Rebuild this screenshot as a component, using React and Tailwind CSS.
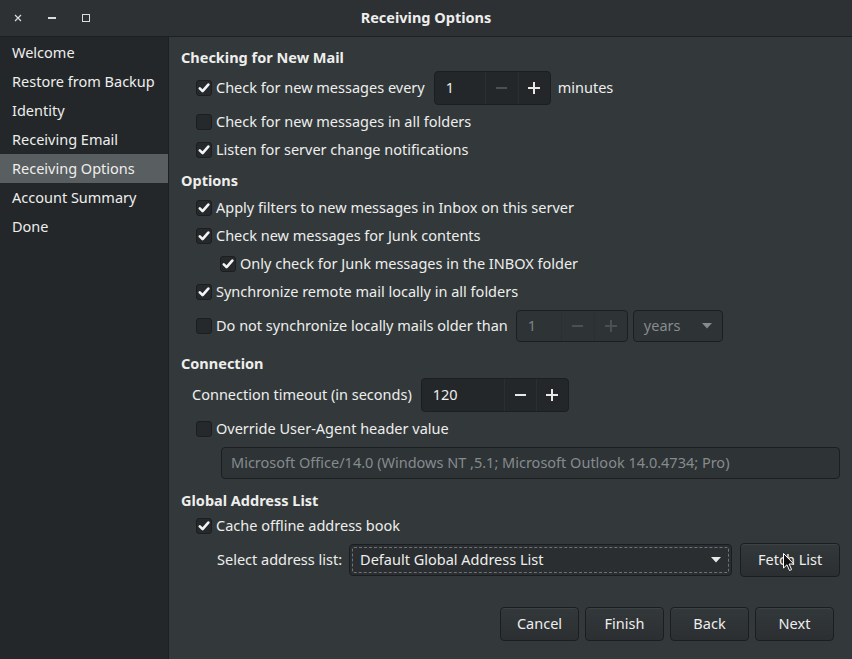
import React from 'react';

const font = { fontFamily: '"Noto Sans", "DejaVu Sans", sans-serif' };

function Check({ checked }) {
  return (
    <span className="w-4 h-4 shrink-0 rounded-[3px] border border-[#1b1d1f] bg-[#25292c] flex items-center justify-center">
      {checked && (
        <svg width="12" height="12" viewBox="0 0 12 12">
          <path d="M1.8 6.3 L4.6 9.1 L10.3 2.6" fill="none" stroke="#f4f4f4" strokeWidth="2.6" strokeLinecap="round" strokeLinejoin="round" />
        </svg>
      )}
    </span>
  );
}

function CheckRow({ checked, label, indent = 'pl-[27px]', h = 'h-[28px]', mt = '' }) {
  return (
    <div className={`flex items-center gap-1 ${indent} ${h} ${mt}`}>
      <Check checked={checked} />
      <span>{label}</span>
    </div>
  );
}

function Heading({ children, h = 'h-[24px]', mt = '' }) {
  return <div className={`flex items-center pl-[12px] font-bold ${h} ${mt}`}>{children}</div>;
}

function Minus({ dim }) {
  return <span className={`block w-[11px] h-[2px] ${dim ? 'bg-[#4b5054]' : 'bg-[#e8e8e7]'}`} />;
}

function Plus({ dim }) {
  const c = dim ? 'bg-[#4b5054]' : 'bg-[#e8e8e7]';
  return (
    <span className="relative block w-[12px] h-[12px]">
      <span className={`absolute left-0 top-[5px] w-[12px] h-[2px] ${c}`} />
      <span className={`absolute top-0 left-[5px] w-[2px] h-[12px] ${c}`} />
    </span>
  );
}

function Spin({ value, w, mw, pw, h, disabled, minusDim }) {
  return (
    <div className={`flex ${h} rounded-[4px] border border-[#1c1f21] ${disabled ? 'bg-[#2e3336]' : 'bg-[#232729]'}`}>
      <div className={`${w} flex items-center pl-[11px] ${disabled ? 'text-[#7d8285]' : ''}`}>{value}</div>
      <div className={`${mw} flex items-center justify-center border-l border-[#2b2f32]`}>
        <Minus dim={disabled || minusDim} />
      </div>
      <div className={`${pw} flex items-center justify-center border-l border-[#2b2f32]`}>
        <Plus dim={disabled} />
      </div>
    </div>
  );
}

function Arrow({ dim }) {
  return (
    <svg width="10" height="6" viewBox="0 0 10 6">
      <path d="M0 0 L10 0 L5 5.5 Z" fill={dim ? '#868b8e' : '#e8e8e7'} />
    </svg>
  );
}

function Button({ children, w = 'w-[79px]' }) {
  return (
    <div className={`${w} h-[34px] flex items-center justify-center rounded-[4px] border border-[#1b1e20] bg-gradient-to-b from-[#33383b] to-[#2b2f32] shadow-[inset_0_1px_0_rgba(255,255,255,0.05)]`}>
      {children}
    </div>
  );
}

const sidebarItems = ['Welcome', 'Restore from Backup', 'Identity', 'Receiving Email', 'Receiving Options', 'Account Summary', 'Done'];

export default function App() {
  return (
    <div className="w-[852px] h-[659px] overflow-hidden flex flex-col bg-[#33393b] text-[#eeeeec] text-[14.5px]" style={font}>
      {/* Title bar */}
      <div className="relative h-[37px] shrink-0 flex items-center bg-[#2d3134] border-b border-[#1d2022]">
        <div className="flex items-center h-full">
          <span className="w-[36px] flex justify-center">
            <svg width="8" height="8" viewBox="0 0 8 8">
              <path d="M1 1 L7 7 M7 1 L1 7" stroke="#dcdcdc" strokeWidth="1.2" />
            </svg>
          </span>
          <span className="w-[32px] flex justify-center">
            <span className="block w-[8px] h-[1.5px] bg-[#dcdcdc]" />
          </span>
          <span className="w-[36px] flex justify-center">
            <span className="block w-[8px] h-[8px] border-[1.5px] border-[#dcdcdc]" />
          </span>
        </div>
        <div className="absolute inset-0 flex items-center justify-center font-bold pointer-events-none">Receiving Options</div>
      </div>

      <div className="flex flex-1 min-h-0">
        {/* Sidebar */}
        <div className="w-[169px] shrink-0 bg-[#23272a] border-r border-[#1e2123] pt-[1px]">
          {sidebarItems.map((item) => (
            <div
              key={item}
              className={`h-[29px] flex items-center px-[12px] ${item === 'Receiving Options' ? 'bg-[#595e60]' : ''}`}
            >
              {item}
            </div>
          ))}
        </div>

        {/* Main */}
        <div className="flex-1 flex flex-col">
          <Heading mt="mt-[9px]">Checking for New Mail</Heading>
          <div className="flex items-center gap-1 pl-[27px] h-[34px] mt-[1px]">
            <Check checked />
            <span>Check for new messages every</span>
            <span className="ml-[5px]">
              <Spin value="1" w="w-[50px]" mw="w-[33px]" pw="w-[32px]" h="h-[34px]" minusDim />
            </span>
            <span className="ml-[3px]">minutes</span>
          </div>
          <CheckRow label="Check for new messages in all folders" mt="mt-[3px]" />
          <CheckRow checked label="Listen for server change notifications" />

          <Heading h="h-[26px]" mt="mt-[4px]">Options</Heading>
          <CheckRow checked label="Apply filters to new messages in Inbox on this server" />
          <CheckRow checked label="Check new messages for Junk contents" />
          <CheckRow checked label="Only check for Junk messages in the INBOX folder" indent="pl-[51px]" />
          <CheckRow checked label="Synchronize remote mail locally in all folders" />
          <div className="flex items-center gap-1 pl-[27px] h-[32px] mt-[4px]">
            <Check />
            <span>Do not synchronize locally mails older than</span>
            <span className="ml-[4px]">
              <Spin value="1" w="w-[44px]" mw="w-[33px]" pw="w-[33px]" h="h-[32px]" disabled />
            </span>
            <div className="ml-[1px] w-[90px] h-[32px] flex items-center justify-between pl-[10px] pr-[10px] rounded-[4px] border border-[#1c1f21] bg-[#2e3336] text-[#868b8e]">
              <span>years</span>
              <Arrow dim />
            </div>
          </div>

          <Heading mt="mt-[10px]">Connection</Heading>
          <div className="flex items-center pl-[23px] h-[34px] mt-[2px]">
            <span>Connection timeout (in seconds)</span>
            <span className="ml-[9px]">
              <Spin value="120" w="w-[82px]" mw="w-[32px]" pw="w-[32px]" h="h-[34px]" />
            </span>
          </div>
          <CheckRow label="Override User-Agent header value" mt="mt-[3px]" />
          <div className="pl-[52px] pr-[12px] mt-[4px]">
            <div className="h-[32px] flex items-center px-[9px] rounded-[4px] border border-[#1c1f21] bg-[#2e3336] text-[#868b8e]">
              Microsoft Office/14.0 (Windows NT ,5.1; Microsoft Outlook 14.0.4734; Pro)
            </div>
          </div>

          <Heading h="h-[22px]" mt="mt-[11px]">Global Address List</Heading>
          <CheckRow checked label="Cache offline address book" />
          <div className="flex items-center pl-[48px] h-[34px] mt-[3px]">
            <span>Select address list:</span>
            <div className="ml-[7px] w-[383px] h-[32px] rounded-[4px] border border-[#1b1e20] bg-[#2a2e31] p-[2px]">
              <div className="h-full flex items-center justify-between pl-[7px] pr-[7px] border border-dashed border-[#6d7275] rounded-[2px]">
                <span>Default Global Address List</span>
                <Arrow />
              </div>
            </div>
            <div className="ml-[8px] relative">
              <Button w="w-[100px]">Fetch List</Button>
              <svg className="absolute left-[43px] top-[10px]" width="12" height="19" viewBox="0 0 12 19">
                <path d="M0.5 0.5 L0.5 15 L4 11.8 L6.5 17.5 L8.6 16.6 L6.1 11 L10.8 11 Z" fill="#111" stroke="#fff" strokeWidth="1" strokeLinejoin="round" />
              </svg>
            </div>
          </div>

          <div className="flex justify-end gap-[6px] pr-[18px] mt-[30px]">
            <Button>Cancel</Button>
            <Button>Finish</Button>
            <Button>Back</Button>
            <Button>Next</Button>
          </div>
        </div>
      </div>
    </div>
  );
}
